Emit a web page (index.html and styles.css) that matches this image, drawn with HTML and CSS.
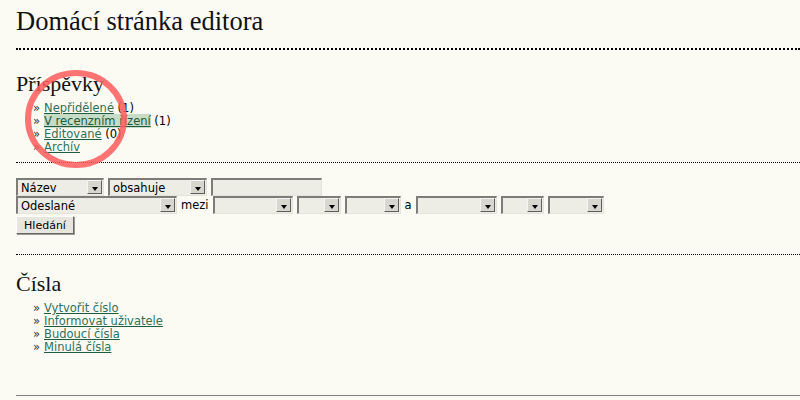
FILE: index.html
```html
<!DOCTYPE html>
<html lang="cs">
<head>
<meta charset="utf-8">
<title>Domácí stránka editora</title>
<link rel="stylesheet" href="styles.css">
</head>
<body>
<div class="page">
  <h1 class="title">Domácí stránka editora</h1>
  <div class="sep-thick"></div>

  <h2 class="section">Příspěvky</h2>
  <ul class="links">
    <li><a href="#">Nepřidělené</a> (1)</li>
    <li><a href="#" class="hl">V recenzním řízení</a> (1)</li>
    <li><a href="#">Editované</a> (0)</li>
    <li><a href="#">Archív</a></li>
  </ul>
  <div class="sep-dot"></div>

  <form class="search">
    <div class="row">
      <span class="sel w88"><span class="val">Název</span></span>
      <span class="sel w99"><span class="val">obsahuje</span></span>
      <span class="txt w111"></span>
    </div>
    <div class="row">
      <span class="sel w161"><span class="val">Odeslané</span></span>
      <span class="lbl">mezi</span>
      <span class="sel w80"></span>
      <span class="sel w44"></span>
      <span class="sel w56"></span>
      <span class="lbl">a</span>
      <span class="sel w81"></span>
      <span class="sel w43"></span>
      <span class="sel w56"></span>
    </div>
    <div class="row">
      <button type="button" class="btn">Hledání</button>
    </div>
  </form>
  <div class="sep-dot sep-after-form"></div>

  <h2 class="section section-2">Čísla</h2>
  <ul class="links">
    <li><a href="#">Vytvořit číslo</a></li>
    <li><a href="#">Informovat uživatele</a></li>
    <li><a href="#">Budoucí čísla</a></li>
    <li><a href="#">Minulá čísla</a></li>
  </ul>
  <div class="sep-solid"></div>
</div>

<svg class="annot" width="104" height="100" viewBox="0 0 104 100">
  <ellipse cx="52" cy="50" rx="48" ry="46" fill="none" stroke="#ff5c5c" stroke-opacity="0.85" stroke-width="6"/>
</svg>
</body>
</html>
```

FILE: styles.css
```css
html, body {
  margin: 0;
  padding: 0;
  background: #fbfbf3;
}

body {
  font-family: "DejaVu Sans", Verdana, sans-serif;
  font-size: 11.5px;
  color: #000;
  position: relative;
}

.page {
  padding-left: 16px;
  overflow: hidden;
}

.title {
  font-family: "Liberation Serif", Georgia, serif;
  font-weight: normal;
  font-size: 26.5px;
  line-height: 30px;
  margin: 6px 0 0 0;
  color: #111;
}

.sep-thick {
  margin-top: 12px;
  border-top: 2px dotted #000;
}

.section {
  font-family: "Liberation Serif", Georgia, serif;
  font-weight: normal;
  font-size: 22px;
  line-height: 26px;
  margin: 21px 0 0 0;
  color: #111;
}

.section-2 {
  margin-top: 16px;
}

.links {
  list-style: none;
  margin: 5px 0 0 0;
  padding: 0 0 0 17px;
}

.links li {
  line-height: 13px;
  height: 13px;
}

.links li::before {
  content: "»";
  color: #333;
  margin-right: 4px;
}

.links a {
  color: #2f7059;
  text-decoration: underline;
  text-decoration-color: #1d5a40;
}

.links a.hl {
  background: #c6dcc6;
  color: #1f5a3c;
}

.sep-dot {
  margin-top: 8px;
  border-top: 1px dotted #000;
}

.search {
  margin-top: 15px;
}

.row {
  display: flex;
  align-items: center;
  gap: 4px;
  height: 18px;
}

.row:last-child {
  margin-top: 2px;
}

.sel, .txt {
  box-sizing: border-box;
  height: 18px;
  position: relative;
  background: #eeede5;
  border-style: solid;
  border-width: 2px 1px 1px 2px;
  border-color: #7c7c78 #e4e3da #e4e3da #7c7c78;
  display: flex;
  align-items: center;
}

.sel .val {
  padding-left: 3px;
  font-size: 11.5px;
  color: #000;
}

.sel::after {
  content: "";
  position: absolute;
  right: 1px;
  top: 0;
  width: 15px;
  height: 14px;
  background: #d8d7cf;
  border: 1px solid;
  border-color: #f6f6f0 #5e5e5a #5e5e5a #f6f6f0;
  box-sizing: border-box;
}

.sel::before {
  content: "";
  position: absolute;
  right: 5px;
  top: 7px;
  width: 0;
  height: 0;
  border-left: 3.5px solid transparent;
  border-right: 3.5px solid transparent;
  border-top: 4px solid #000;
  z-index: 1;
}

.w88 { width: 88px; }
.w99 { width: 99px; }
.w111 { width: 111px; }
.w161 { width: 161px; }
.w80 { width: 80px; }
.w44 { width: 44px; }
.w56 { width: 56px; }
.w81 { width: 81px; }
.w43 { width: 43px; }

.lbl {
  font-size: 11.5px;
  color: #000;
}

.btn {
  font-family: "DejaVu Sans", Tahoma, sans-serif;
  font-size: 11px;
  height: 18px;
  width: 58px;
  padding: 0;
  background: #e8e6dc;
  border: 1px solid;
  border-color: #ffffff #6a6a66 #6a6a66 #ffffff;
  box-shadow: 1px 1px 0 #9a9a94;
  color: #000;
}

.sep-after-form {
  margin-top: 20px;
}

.sep-solid {
  margin-top: 41px;
  border-top: 1px solid #808080;
}

.annot {
  position: absolute;
  left: 24px;
  top: 69px;
}
```
